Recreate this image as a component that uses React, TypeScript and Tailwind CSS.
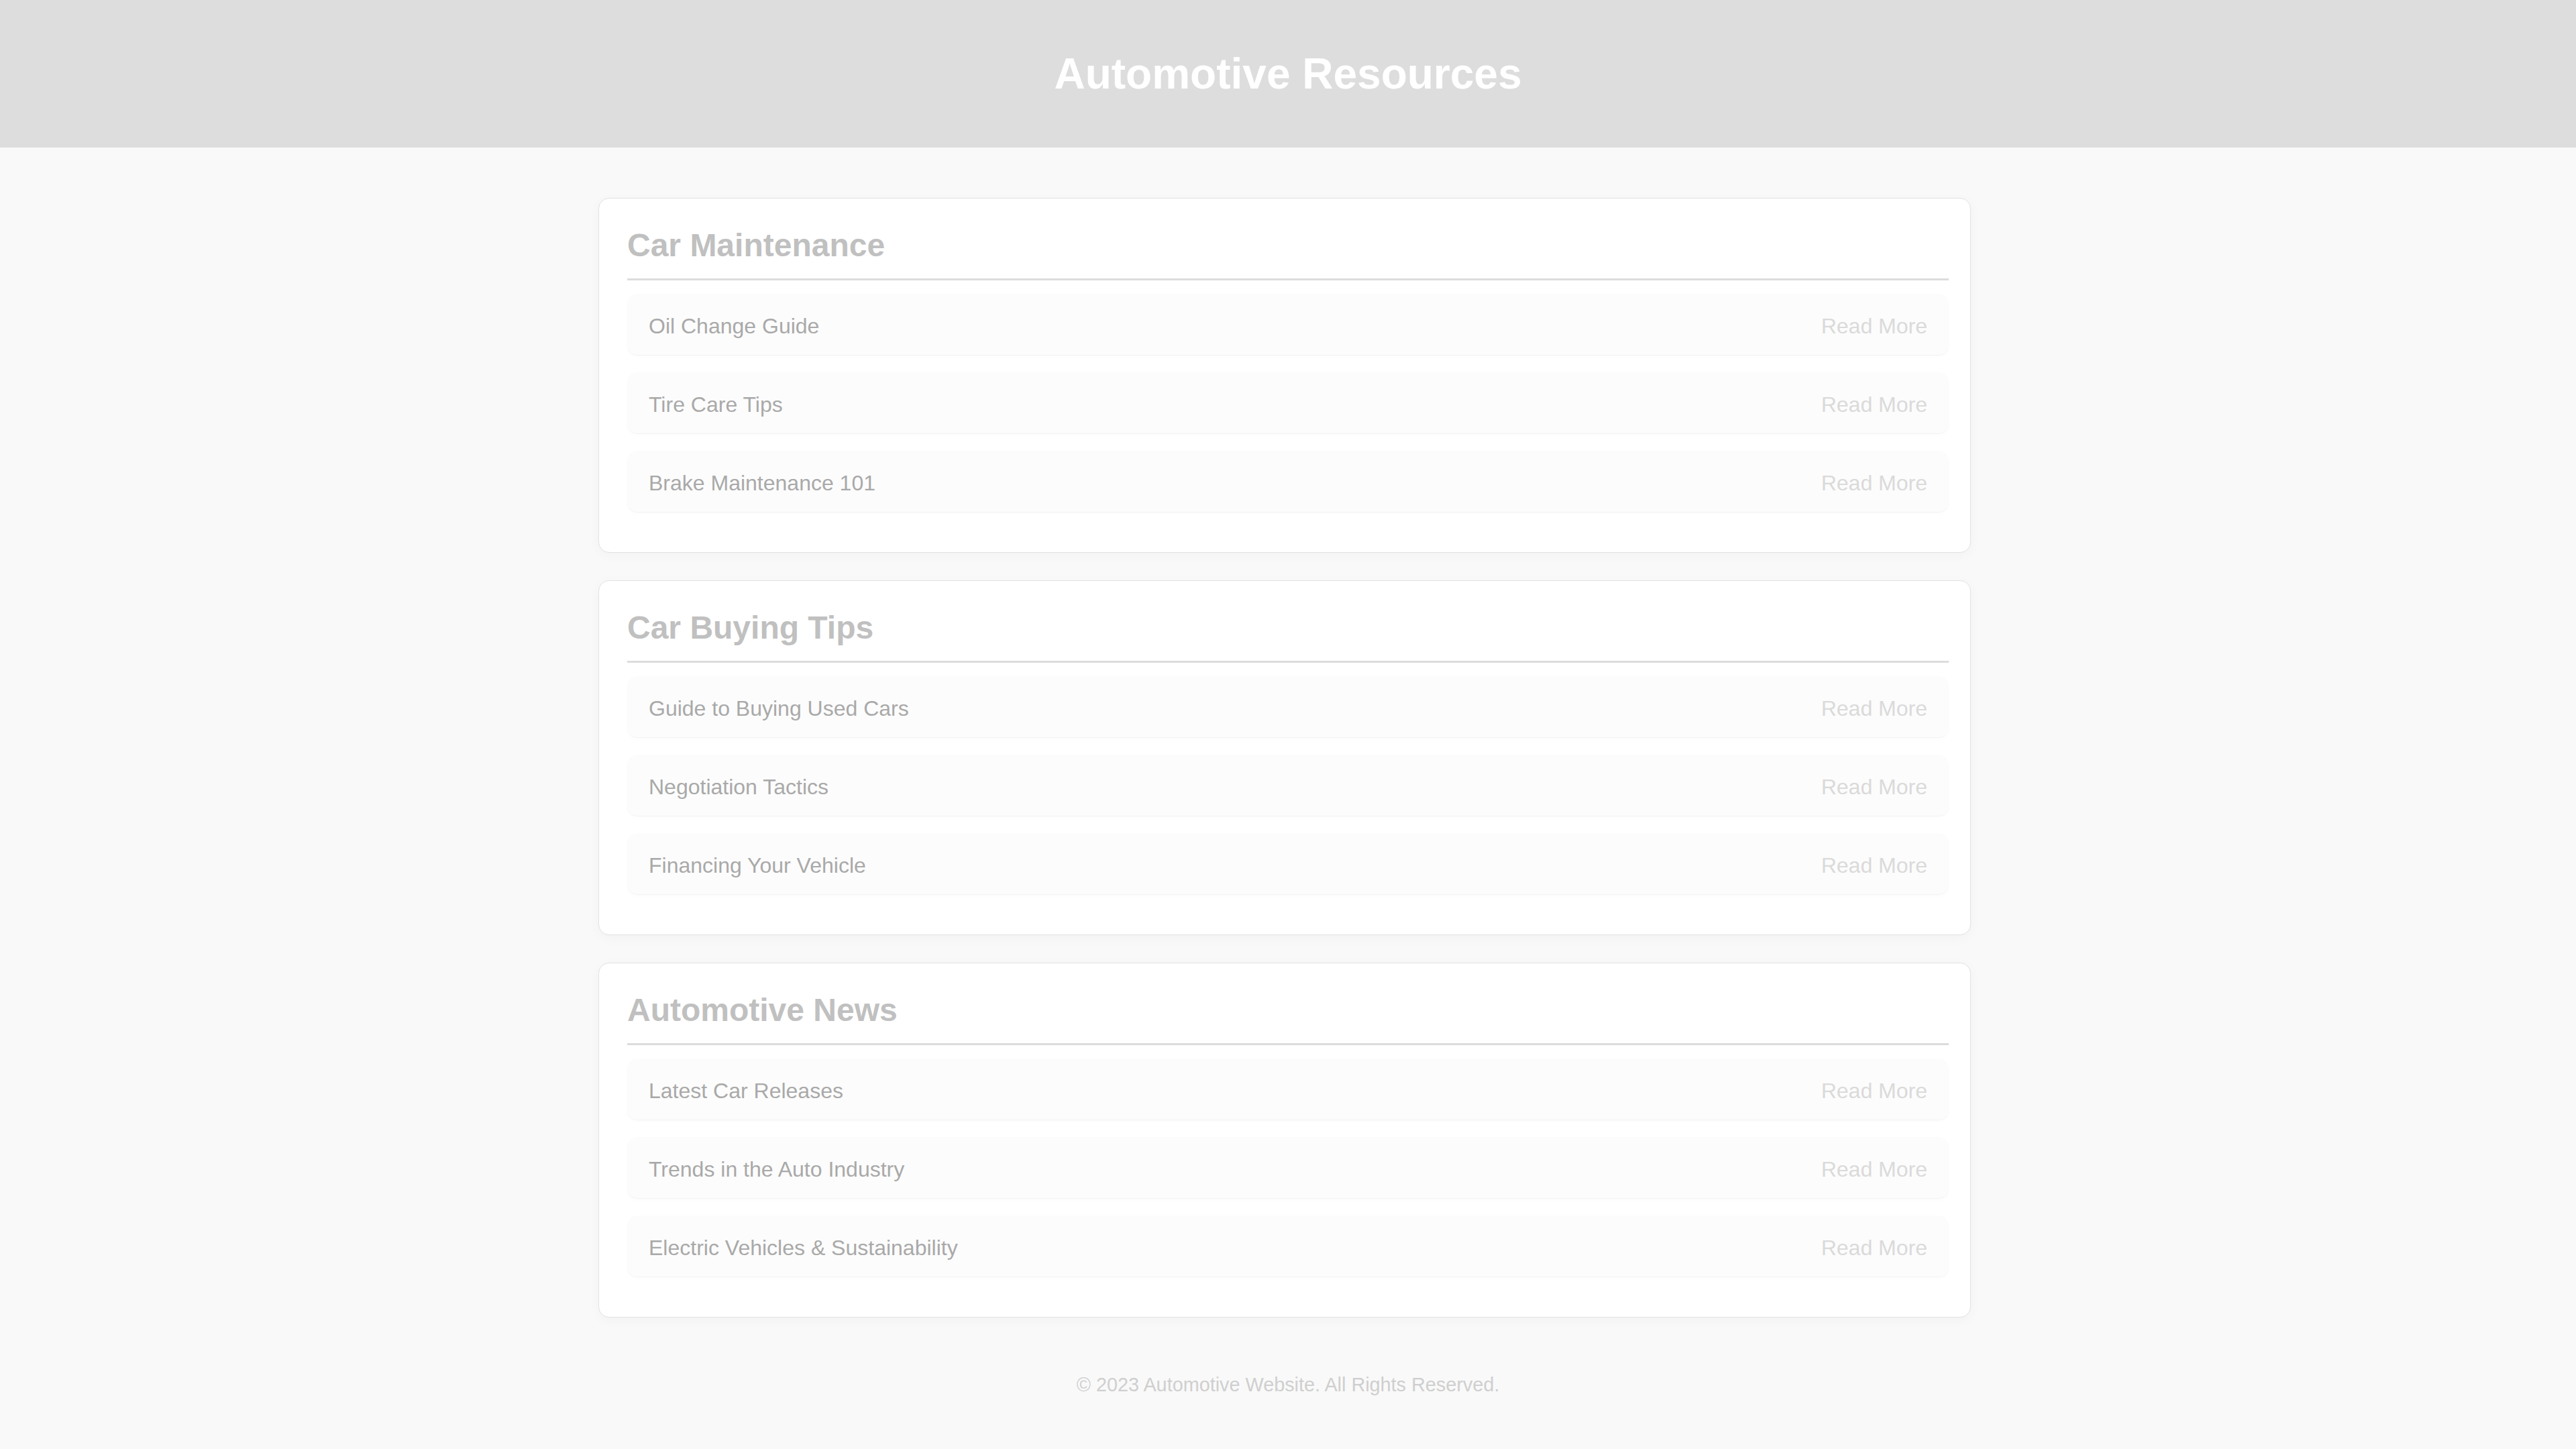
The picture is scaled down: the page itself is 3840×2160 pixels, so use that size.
import React from 'react';

interface Section {
  title: string;
  items: string[];
}

const SECTIONS: Section[] = [
  {
    title: 'Car Maintenance',
    items: ['Oil Change Guide', 'Tire Care Tips', 'Brake Maintenance 101'],
  },
  {
    title: 'Car Buying Tips',
    items: ['Guide to Buying Used Cars', 'Negotiation Tactics', 'Financing Your Vehicle'],
  },
  {
    title: 'Automotive News',
    items: ['Latest Car Releases', 'Trends in the Auto Industry', 'Electric Vehicles & Sustainability'],
  },
];

const ResourceCard: React.FC<{ section: Section }> = ({ section }) => (
  <section className="bg-white border border-[#e2e2e2] rounded-[16px] shadow-[0_4px_18px_rgba(0,0,0,0.03)] pt-[42px] pl-[42px] pr-[32px] pb-[59px]">
    <h2 className="text-[48px] font-bold leading-[normal] text-[#c0c0c0] pb-[22px] border-b-[3px] border-[#dcdcdc] mb-[20px]">
      {section.title}
    </h2>
    <ul className="flex flex-col gap-[25px]">
      {section.items.map((item) => (
        <li
          key={item}
          className="flex items-center justify-between bg-[#fcfcfc] rounded-[15px] px-8 pt-[30px] pb-[24px] border-b border-[#f2f2f2] shadow-[0_2px_6px_rgba(0,0,0,0.015)] text-[32px] leading-[normal]"
        >
          <span className="text-[#a9a9a9]">{item}</span>
          <a href="#" className="text-[#dadada]">
            Read More
          </a>
        </li>
      ))}
    </ul>
  </section>
);

export default function App() {
  return (
    <div className="min-h-screen bg-[#f9f9f9] font-['Liberation_Sans',Arial,sans-serif]">
      {/* Header */}
      <header className="h-[220px] bg-[#dddddd] flex items-center justify-center">
        <h1 className="text-[64px] font-bold leading-[normal] text-white">Automotive Resources</h1>
      </header>

      {/* Sections */}
      <main className="max-w-[2056px] mx-auto pr-[10px] pt-[75px] flex flex-col gap-[41px]">
        {SECTIONS.map((section) => (
          <ResourceCard key={section.title} section={section} />
        ))}
      </main>

      {/* Footer */}
      <footer className="pt-[84px] pb-[40px] text-center text-[28.8px] leading-[normal] text-[#cfcfcf]">
        © 2023 Automotive Website. All Rights Reserved.
      </footer>
    </div>
  );
}
